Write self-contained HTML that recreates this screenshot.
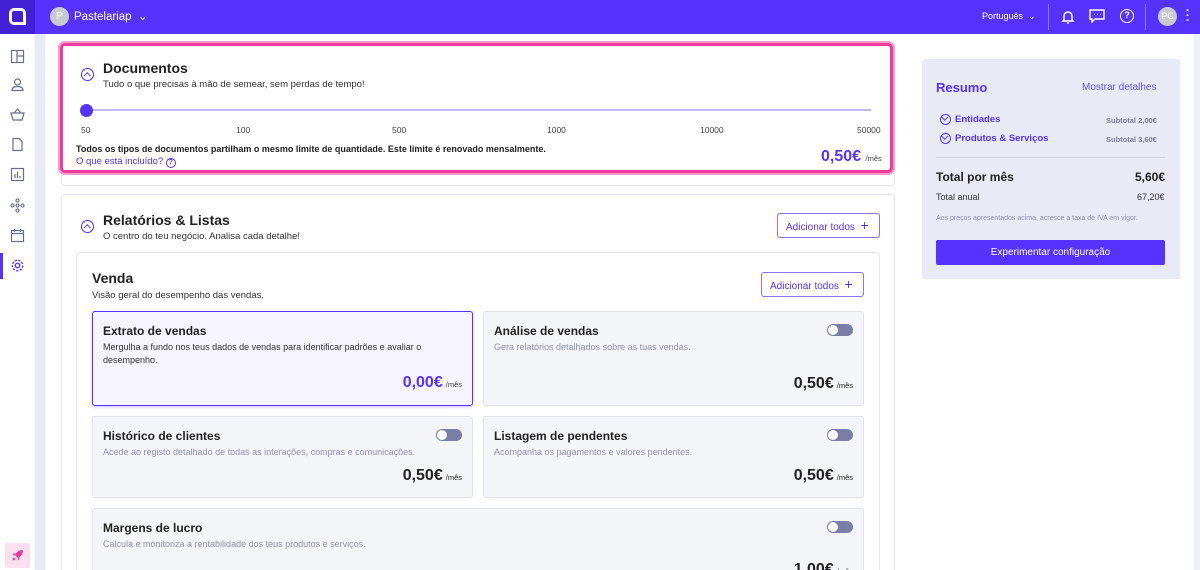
<!DOCTYPE html>
<html><head><meta charset="utf-8"><style>
*{box-sizing:border-box;margin:0;padding:0}
html{width:1200px;height:570px;overflow:hidden}
body{width:1200px;height:570px;overflow:hidden;background:#fff;font-family:"Liberation Sans",sans-serif;color:#222;position:relative}
.abs{position:absolute}
.top{left:0;top:0;width:1200px;height:34px;background:#5632ff}
.logo{left:0;top:0;width:35px;height:34px;background:#4220d6}
.side{left:0;top:34px;width:35px;height:536px;background:#fff}
.strip{left:35px;top:34px;width:10px;height:536px;background:#e8eaf6}
.ic{position:absolute;left:10px;width:15px;height:15px}
.card{position:absolute;background:#fff;border:1px solid #e6e7ee;border-radius:4px}
h2{font-size:14px;font-weight:bold;color:#222}
.sub{font-size:9.5px;color:#333}
.chev{position:absolute;width:13px;height:13px;border:1.5px solid #5632ff;border-radius:50%}
.chev:after{content:"";position:absolute;left:3.2px;top:4px;width:3.5px;height:3.5px;border-left:1.5px solid #5632ff;border-top:1.5px solid #5632ff;transform:rotate(45deg)}
.btn{position:absolute;border:1px solid #8a74ff;border-radius:3px;color:#5632ff;font-size:10px;height:25px;line-height:23px;padding-left:8px}
.it{position:absolute;background:#f4f5f9;border:1px solid #e2e3ea;border-radius:3px}
.it h3{position:absolute;left:10px;top:12px;font-size:12px;font-weight:bold}
.it p{position:absolute;left:10px;top:29px;font-size:9px;color:#8e91b0;line-height:13px}
.price{position:absolute;right:10px;font-size:16px;font-weight:bold}
.price small{font-size:7.5px;font-weight:normal;margin-left:3px}
.tog{position:absolute;right:10px;top:12px;width:26px;height:12px;border-radius:6px;background:#7a7ea6}
.tog:after{content:"";position:absolute;left:1px;top:1px;width:10px;height:10px;border-radius:50%;background:#fff}
.tick{position:absolute;top:125px;font-size:8.5px;color:#444}
</style></head><body>
<div class="abs top"></div>
<div class="abs logo"><div class="abs" style="left:9px;top:8px;width:17px;height:17px;border:3.5px solid #fff;border-radius:5px 5px 1px 5px"></div></div>
<div class="abs" style="left:50px;top:7px;width:19px;height:19px;border-radius:50%;background:#c9c9d1;color:#fff;font-size:10px;text-align:center;line-height:19px">P</div>
<div class="abs" style="left:74px;top:9px;color:#fff;font-size:11.5px">Pastelariap&nbsp;&nbsp;⌄</div>
<div class="abs" style="left:982px;top:11px;color:#fff;font-size:9px">Português &nbsp;⌄</div>
<div class="abs" style="left:1048px;top:4px;width:1px;height:26px;background:#8d78ff"></div>
<div class="abs" style="left:1145px;top:4px;width:1px;height:26px;background:#8d78ff"></div>
<svg class="abs" style="left:1061px;top:9px" width="14" height="16" viewBox="0 0 14 16" fill="none" stroke="#fff" stroke-width="1.5"><path d="M3 11V7a4 4 0 0 1 8 0v4l1 1H2z"/><path d="M6 14h2"/></svg>
<svg class="abs" style="left:1089px;top:9px" width="16" height="14" viewBox="0 0 16 14" fill="none" stroke="#fff" stroke-width="1.4"><path d="M1 1h14v9H6l-3 3v-3H1z"/><path d="M5 5.5h.5M8 5.5h.5M11 5.5h.5"/></svg>
<div class="abs" style="left:1120px;top:9px;width:14px;height:14px;border:1.5px solid #fff;border-radius:50%;color:#fff;font-size:9px;font-weight:bold;text-align:center;line-height:11px">?</div>
<div class="abs" style="left:1158px;top:7px;width:19px;height:19px;border-radius:50%;background:#c9c9d1;color:#fff;font-size:9px;text-align:center;line-height:19px">PC</div>
<div class="abs" style="left:1186px;top:9px;color:#fff;font-size:11px;font-weight:bold;line-height:5px">·<br>·<br>·</div>

<div class="abs side"></div>
<div class="abs strip"></div>
<svg class="ic" style="top:49px" viewBox="0 0 15 15" fill="none" stroke="#6b6f8a" stroke-width="1.2"><rect x="1.5" y="1.5" width="12" height="12"/><path d="M7 1.5v12M7 7h6.5"/></svg>
<svg class="ic" style="top:77px" viewBox="0 0 15 15" fill="none" stroke="#6b6f8a" stroke-width="1.2"><circle cx="7.5" cy="5" r="3"/><path d="M2 13.5c0-3 2.5-4 5.5-4s5.5 1 5.5 4z"/></svg>
<svg class="ic" style="top:107px" viewBox="0 0 15 15" fill="none" stroke="#6b6f8a" stroke-width="1.2"><path d="M1 6h13l-2 7H3zM4 6l3.5-4 3.5 4"/></svg>
<svg class="ic" style="top:137px" viewBox="0 0 15 15" fill="none" stroke="#6b6f8a" stroke-width="1.2"><path d="M3 1.5h6l3 3v9H3z"/></svg>
<svg class="ic" style="top:167px" viewBox="0 0 15 15" fill="none" stroke="#6b6f8a" stroke-width="1.2"><rect x="1.5" y="1.5" width="12" height="12"/><path d="M5 11V7M7.5 11V5M10 11V9"/></svg>
<svg class="ic" style="top:198px" viewBox="0 0 15 15" fill="none" stroke="#6b6f8a" stroke-width="1.1"><circle cx="7.5" cy="2.5" r="1.5"/><circle cx="2.5" cy="7.5" r="1.5"/><circle cx="7.5" cy="7.5" r="1.5"/><circle cx="12.5" cy="7.5" r="1.5"/><circle cx="7.5" cy="12.5" r="1.5"/></svg>
<svg class="ic" style="top:228px" viewBox="0 0 15 15" fill="none" stroke="#6b6f8a" stroke-width="1.2"><rect x="1.5" y="2.5" width="12" height="11"/><path d="M1.5 5.5h12M4.5 1v3M10.5 1v3" /></svg>
<div class="abs" style="left:0;top:253px;width:3px;height:26px;background:#5632ff"></div>
<svg class="ic" style="top:258px" viewBox="0 0 15 15" fill="none" stroke="#5632ff" stroke-width="1.4"><circle cx="7.5" cy="7.5" r="2.2"/><circle cx="7.5" cy="7.5" r="5.2" stroke-dasharray="2.2 1.4"/></svg>
<div class="abs" style="left:5px;top:543px;width:25px;height:25px;background:#fde0ef;border-radius:2px"></div>
<svg class="abs" style="left:11px;top:549px" width="13" height="13" viewBox="0 0 13 13" fill="#ec3c9a"><path d="M12 1C8 1 5.5 3 4 6l3 3c3-1.5 5-4 5-8z"/><path d="M4 6L1.5 6.5 3 4.5h2.5zM7 9l-.5 2.5 2-1.5V7.5z"/><path d="M3 8.5c-1 .5-1.5 2-1.5 3 1 0 2.5-.5 3-1.5z"/></svg>

<!-- documentos -->
<div class="card" style="left:61px;top:44px;width:834px;height:142px"></div>
<div class="abs" style="left:58px;top:41px;width:837px;height:134px;border:2px solid #f79bcb;border-radius:7px"></div>
<div class="abs" style="left:60px;top:43px;width:833px;height:130px;border:3px solid #ec3c9a;border-radius:5px;background:#fff"></div>
<div class="chev" style="left:81px;top:68px"></div>
<h2 class="abs" style="left:103px;top:60px">Documentos</h2>
<div class="abs sub" style="left:103px;top:79px">Tudo o que precisas à mão de semear, sem perdas de tempo!</div>
<div class="abs" style="left:86px;top:109px;width:785px;height:2px;background:#c4b8ff"></div>
<div class="abs" style="left:80px;top:104px;width:13px;height:13px;border-radius:50%;background:#5632ff"></div>
<div class="tick" style="left:81px">50</div><div class="tick" style="left:236px">100</div><div class="tick" style="left:392px">500</div><div class="tick" style="left:547px">1000</div><div class="tick" style="left:700px">10000</div><div class="tick" style="left:857px">50000</div>
<div class="abs" style="left:76px;top:144px;font-size:9px;font-weight:bold">Todos os tipos de documentos partilham o mesmo limite de quantidade. Este limite é renovado mensalmente.</div>
<div class="abs" style="left:76px;top:156px;font-size:9.5px;color:#5632ff">O que está incluído? <span style="display:inline-block;width:10px;height:10px;border:1.2px solid #5632ff;border-radius:50%;font-size:7px;text-align:center;line-height:8px;font-weight:bold">?</span></div>
<div class="abs" style="left:821px;top:148px;font-size:16px;font-weight:bold;color:#5632ff">0,50€ <span style="font-size:7.5px;font-weight:normal;color:#444">/mês</span></div>

<!-- relatorios -->
<div class="card" style="left:61px;top:194px;width:834px;height:400px"></div>
<div class="chev" style="left:81px;top:220px"></div>
<h2 class="abs" style="left:103px;top:212px">Relatórios &amp; Listas</h2>
<div class="abs sub" style="left:103px;top:231px">O centro do teu negócio. Analisa cada detalhe!</div>
<div class="btn" style="left:777px;top:213px;width:103px">Adicionar todos &nbsp;<b style="font-size:14px;font-weight:normal">+</b></div>
<div class="card" style="left:76px;top:252px;width:804px;height:340px"></div>
<h2 class="abs" style="left:92px;top:270px">Venda</h2>
<div class="abs sub" style="left:92px;top:290px">Visão geral do desempenho das vendas.</div>
<div class="btn" style="left:761px;top:272px;width:103px">Adicionar todos &nbsp;<b style="font-size:14px;font-weight:normal">+</b></div>

<div class="it" style="left:92px;top:311px;width:381px;height:95px;background:#f6f5ff;border:1.5px solid #5632ff;box-shadow:0 1px 3px rgba(86,50,255,.3)">
<h3 style="color:#222">Extrato de vendas</h3><p style="color:#333">Mergulha a fundo nos teus dados de vendas para identificar padrões e avaliar o<br>desempenho.</p>
<div class="price" style="top:62px;color:#5632ff">0,00€<small style="color:#444">/mês</small></div></div>
<div class="it" style="left:483px;top:311px;width:381px;height:95px"><h3>Análise de vendas</h3><p>Gera relatórios detalhados sobre as tuas vendas.</p><div class="tog"></div><div class="price" style="top:63px">0,50€<small>/mês</small></div></div>
<div class="it" style="left:92px;top:416px;width:381px;height:82px"><h3>Histórico de clientes</h3><p>Acede ao registo detalhado de todas as interações, compras e comunicações.</p><div class="tog"></div><div class="price" style="top:50px">0,50€<small>/mês</small></div></div>
<div class="it" style="left:483px;top:416px;width:381px;height:82px"><h3>Listagem de pendentes</h3><p>Acompanha os pagamentos e valores pendentes.</p><div class="tog"></div><div class="price" style="top:50px">0,50€<small>/mês</small></div></div>
<div class="it" style="left:92px;top:508px;width:772px;height:90px"><h3>Margens de lucro</h3><p>Calcula e monitoriza a rentabilidade dos teus produtos e serviços.</p><div class="tog"></div><div class="price" style="top:52px">1,00€<small>/mês</small></div></div>

<!-- resumo -->
<div class="abs" style="left:922px;top:59px;width:258px;height:220px;background:#e8eaf6;border-radius:3px"></div>
<div class="abs" style="left:936px;top:80px;font-size:13px;font-weight:bold;color:#5632ff">Resumo</div>
<div class="abs" style="left:1082px;top:82px;font-size:10px;color:#6a52ff">Mostrar detalhes</div>
<div class="chev" style="left:940px;top:114px;width:11px;height:11px;transform:rotate(180deg)"></div>
<div class="abs" style="left:955px;top:114px;font-size:9.5px;font-weight:bold;color:#5632ff">Entidades</div>
<div class="abs" style="left:1106px;top:116px;font-size:7.5px;font-weight:bold;color:#7a7d95">Subtotal 2,00€</div>
<div class="chev" style="left:940px;top:133px;width:11px;height:11px;transform:rotate(180deg)"></div>
<div class="abs" style="left:955px;top:133px;font-size:9.5px;font-weight:bold;color:#5632ff">Produtos &amp; Serviços</div>
<div class="abs" style="left:1106px;top:135px;font-size:7.5px;font-weight:bold;color:#7a7d95">Subtotal 3,60€</div>
<div class="abs" style="left:936px;top:157px;width:229px;height:1px;background:#d4d6e4"></div>
<div class="abs" style="left:936px;top:170px;font-size:12px;font-weight:bold">Total por mês</div>
<div class="abs" style="left:1135px;top:170px;font-size:12px;font-weight:bold">5,60€</div>
<div class="abs" style="left:936px;top:192px;font-size:9px;color:#333">Total anual</div>
<div class="abs" style="left:1137px;top:192px;font-size:9px;color:#333">67,20€</div>
<div class="abs" style="left:936px;top:215px;font-size:7px;color:#8e91b0">Aos preços apresentados acima, acresce a taxa de IVA em vigor.</div>
<div class="abs" style="left:936px;top:240px;width:229px;height:25px;background:#5632ff;border-radius:2px;color:#fff;font-size:10px;text-align:center;line-height:25px">Experimentar configuração</div>
<div class="abs" style="left:1194px;top:34px;width:6px;height:536px;background:#eef0f6"></div>
</body></html>
